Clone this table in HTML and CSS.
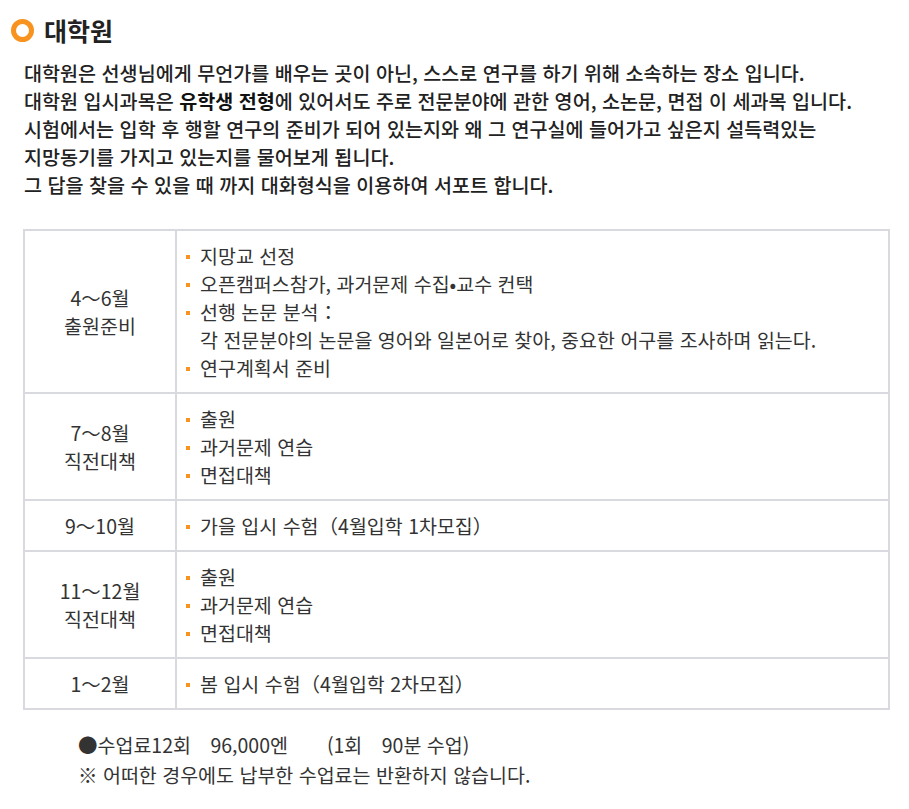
FILE: index.html
```html
<!DOCTYPE html>
<html lang="ko">
<head>
<meta charset="utf-8">
<link rel="stylesheet" href="styles.css">
</head>
<body>
<div class="page">
  <h2 class="title"><span class="ring"></span>대학원</h2>
  <div class="intro">
    <p>대학원은 선생님에게 무언가를 배우는 곳이 아닌, 스스로 연구를 하기 위해 소속하는 장소 입니다.</p>
    <p>대학원 입시과목은 <b>유학생 전형</b>에 있어서도 주로 전문분야에 관한 영어, 소논문, 면접 이 세과목 입니다.</p>
    <p>시험에서는 입학 후 행할 연구의 준비가 되어 있는지와 왜 그 연구실에 들어가고 싶은지 설득력있는</p>
    <p>지망동기를 가지고 있는지를 물어보게 됩니다.</p>
    <p>그 답을 찾을 수 있을 때 까지 대화형식을 이용하여 서포트 합니다.</p>
  </div>
  <table class="plan">
    <tr>
      <th>4～6월<br>출원준비</th>
      <td>
        <ul>
          <li>지망교 선정</li>
          <li>오픈캠퍼스참가, 과거문제 수집•교수 컨택</li>
          <li>선행 논문 분석：<br>각 전문분야의 논문을 영어와 일본어로 찾아, 중요한 어구를 조사하며 읽는다.</li>
          <li>연구계획서 준비</li>
        </ul>
      </td>
    </tr>
    <tr>
      <th>7～8월<br>직전대책</th>
      <td>
        <ul>
          <li>출원</li>
          <li>과거문제 연습</li>
          <li>면접대책</li>
        </ul>
      </td>
    </tr>
    <tr>
      <th>9～10월</th>
      <td>
        <ul>
          <li>가을 입시 수험（4월입학 1차모집）</li>
        </ul>
      </td>
    </tr>
    <tr>
      <th>11～12월<br>직전대책</th>
      <td>
        <ul>
          <li>출원</li>
          <li>과거문제 연습</li>
          <li>면접대책</li>
        </ul>
      </td>
    </tr>
    <tr>
      <th>1～2월</th>
      <td>
        <ul>
          <li>봄 입시 수험（4월입학 2차모집）</li>
        </ul>
      </td>
    </tr>
  </table>
  <div class="fee">
    <p>●수업료12회　96,000엔　　(1회　90분 수업)</p>
    <p>※ 어떠한 경우에도 납부한 수업료는 반환하지 않습니다.</p>
  </div>
</div>
</body>
</html>
```

FILE: styles.css
```css
* { box-sizing: border-box; }
html, body { margin: 0; padding: 0; background: #fff; }
body {
  font-family: "Noto Sans CJK KR", "Noto Sans", sans-serif;
  color: #333;
}
.page { padding: 0 20px 0 23px; }
.title {
  display: flex;
  align-items: center;
  gap: 10px;
  margin: 0 0 0 -12px;
  padding: 15px 0 0 0;
  font-size: 25px;
  font-weight: 700;
  color: #222;
  line-height: 30px;
}
.ring {
  width: 23px;
  height: 23px;
  border: 5px solid #f7931e;
  border-radius: 50%;
}
.intro {
  margin-top: 14px;
  padding-left: 1px;
  font-size: 19.6px;
  font-weight: 500;
  line-height: 28px;
  color: #222;
}
.intro p { margin: 0; white-space: nowrap; }
.intro b { font-weight: 700; color: #111; }
.plan {
  margin-top: 30px;
  width: 867px;
  border-collapse: collapse;
  border: 2px solid #d9dadf;
  font-size: 19.5px;
  line-height: 28px;
  color: #333;
}
.plan th, .plan td {
  border: 2px solid #d9dadf;
  padding: 10.5px 0;
  vertical-align: middle;
}
.plan th {
  width: 152px;
  font-weight: 400;
  text-align: center;
}
.plan td { padding-left: 8px; }
.plan ul { list-style: none; margin: 0; padding: 0; }
.plan li {
  position: relative;
  padding-left: 15px;
  white-space: nowrap;
}
.plan li::before {
  content: "";
  position: absolute;
  left: 1px;
  top: 13px;
  width: 4px;
  height: 4px;
  background: #f7931e;
}
.fee {
  margin-top: 20px;
  padding-left: 55px;
  font-size: 19.5px;
  line-height: 30px;
  color: #333;
}
.fee p { margin: 0; white-space: pre; }
```
